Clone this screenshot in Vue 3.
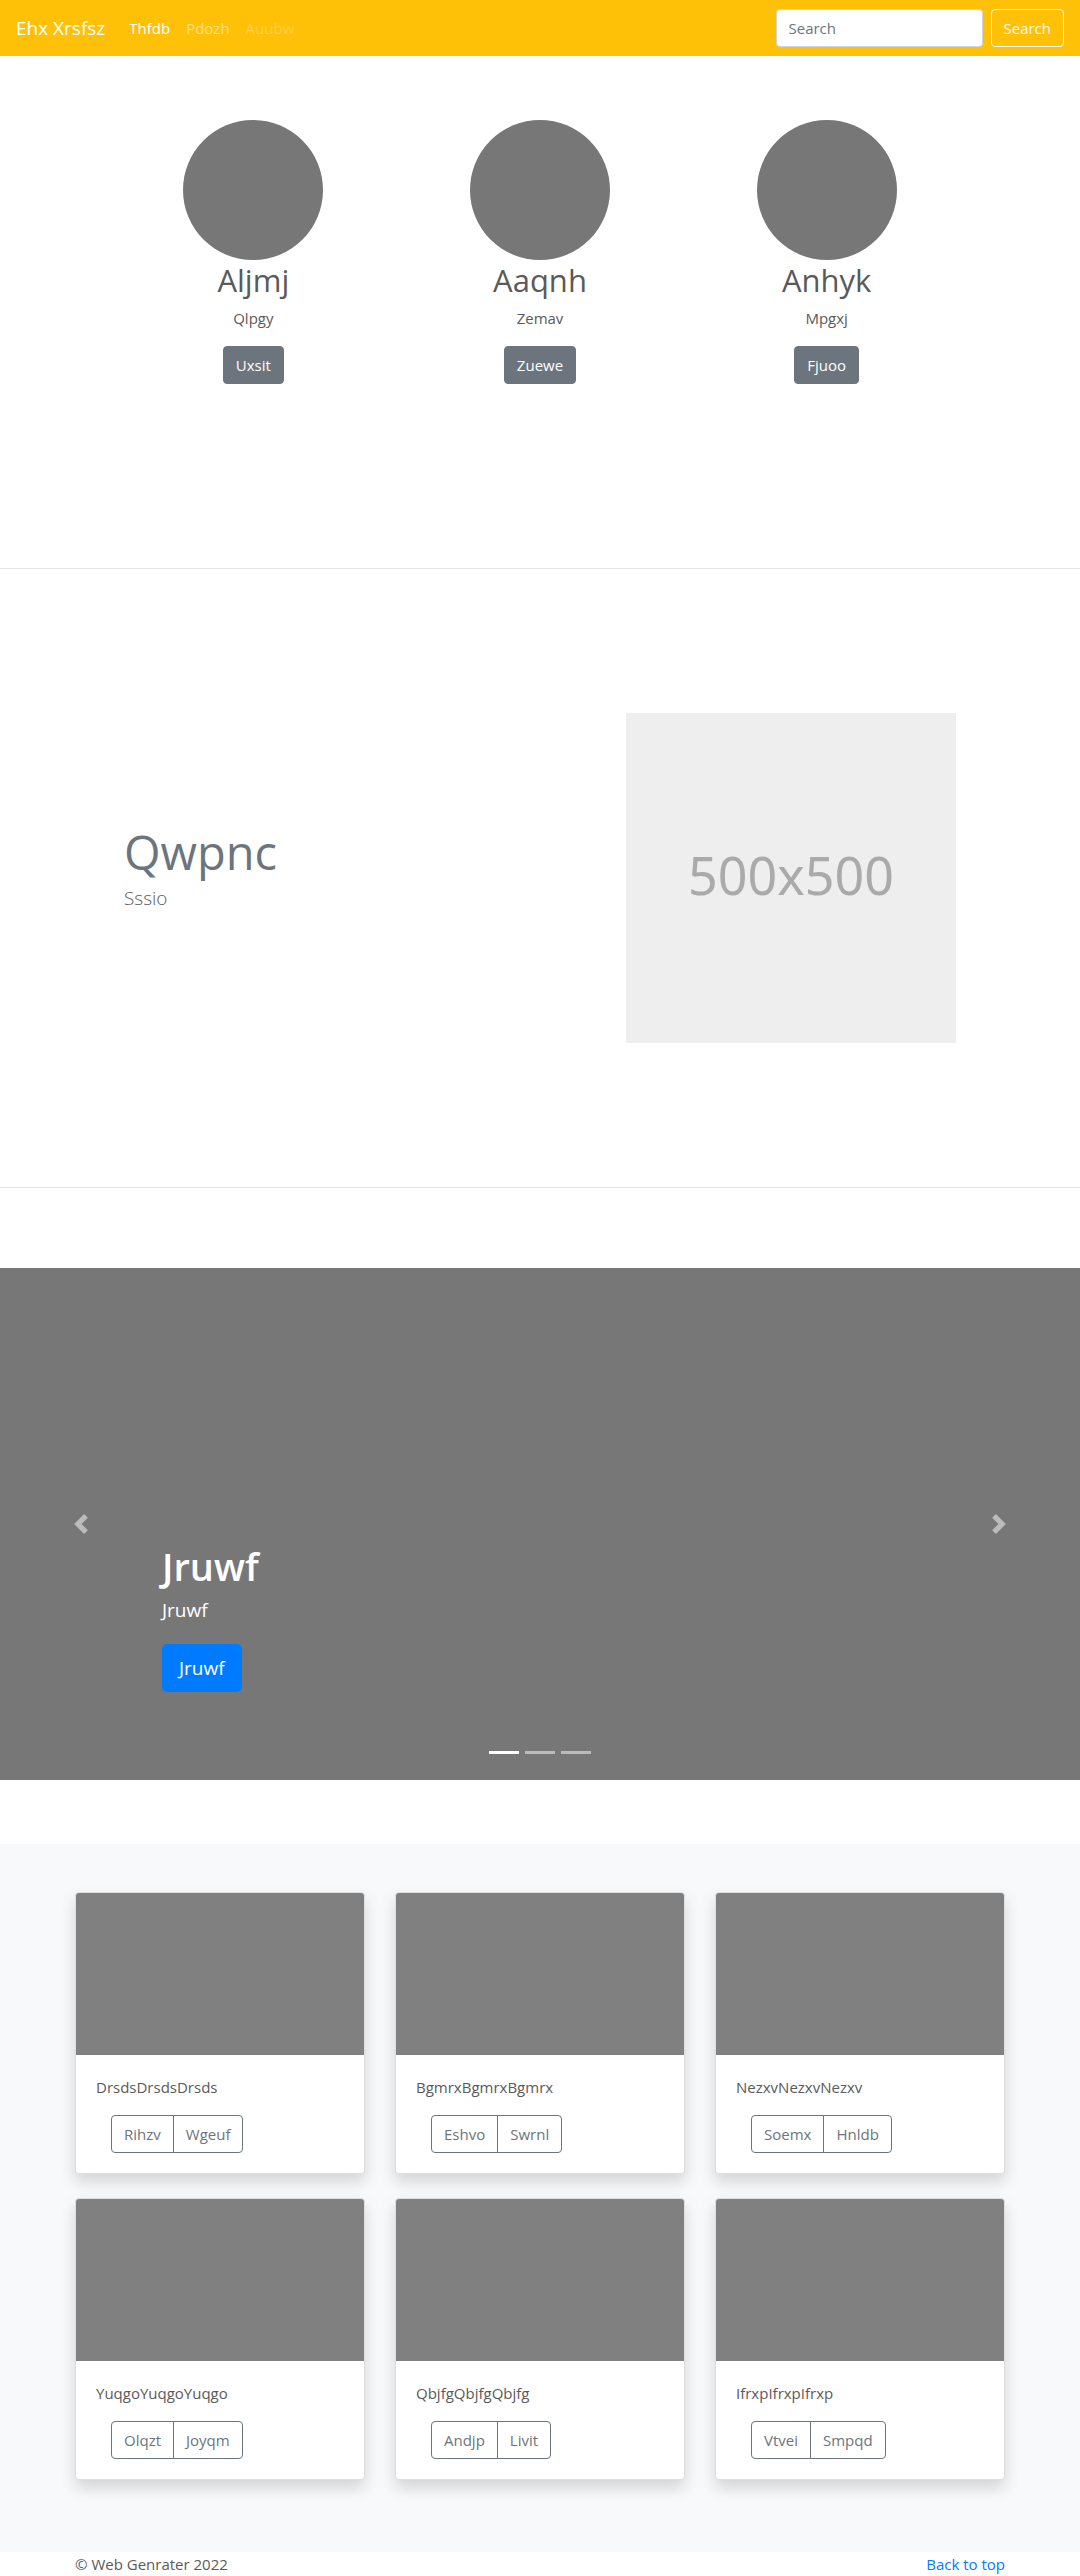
<script setup>
import { ref } from 'vue'

const query = ref('')
const active = ref(0)
const slides = ['Jruwf', 'Jruwf', 'Jruwf']

const people = [
  { name: 'Aljmj', text: 'Qlpgy', action: 'Uxsit' },
  { name: 'Aaqnh', text: 'Zemav', action: 'Zuewe' },
  { name: 'Anhyk', text: 'Mpgxj', action: 'Fjuoo' },
]

const cards = [
  { text: 'DrsdsDrsdsDrsds', actions: ['Rihzv', 'Wgeuf'] },
  { text: 'BgmrxBgmrxBgmrx', actions: ['Eshvo', 'Swrnl'] },
  { text: 'NezxvNezxvNezxv', actions: ['Soemx', 'Hnldb'] },
  { text: 'YuqgoYuqgoYuqgo', actions: ['Olqzt', 'Joyqm'] },
  { text: 'QbjfgQbjfgQbjfg', actions: ['Andjp', 'Livit'] },
  { text: 'IfrxpIfrxpIfrxp', actions: ['Vtvei', 'Smpqd'] },
]

function step(by) {
  active.value = (active.value + by + slides.length) % slides.length
}
</script>

<template>
  <div class="page">
    <header class="navbar">
      <a class="brand" href="#">Ehx Xrsfsz</a>
      <nav class="nav">
        <a class="nav-link current" href="#">Thfdb</a>
        <a class="nav-link" href="#">Pdozh</a>
        <a class="nav-link disabled" href="#" aria-disabled="true">Auubw</a>
      </nav>
      <form class="search" @submit.prevent>
        <input v-model="query" class="search-input" type="search" placeholder="Search" aria-label="Search" />
        <button class="btn btn-outline-light" type="submit">Search</button>
      </form>
    </header>

    <main>
      <section class="people">
        <article v-for="p in people" :key="p.name" class="person">
          <div class="avatar"></div>
          <h2 class="person-name">{{ p.name }}</h2>
          <p class="person-text">{{ p.text }}</p>
          <a class="btn btn-secondary" href="#">{{ p.action }}</a>
        </article>
      </section>

      <hr class="divider" />

      <section class="feature">
        <div class="feature-copy">
          <h2 class="feature-title">Qwpnc</h2>
          <p class="feature-lead">Sssio</p>
        </div>
        <div class="placeholder">500x500</div>
      </section>

      <hr class="divider" />

      <section class="carousel">
        <div class="caption">
          <h1 class="caption-title">{{ slides[active] }}</h1>
          <p class="caption-text">{{ slides[active] }}</p>
          <a class="btn btn-primary" href="#">{{ slides[active] }}</a>
        </div>
        <button class="control prev" type="button" aria-label="Previous" @click="step(-1)">
          <svg viewBox="0 0 8 8" width="20" height="20" fill="#fff">
            <path d="M5.25 0l-4 4 4 4 1.5-1.5-2.5-2.5 2.5-2.5-1.5-1.5z" />
          </svg>
        </button>
        <button class="control next" type="button" aria-label="Next" @click="step(1)">
          <svg viewBox="0 0 8 8" width="20" height="20" fill="#fff">
            <path d="M2.75 0l-1.5 1.5 2.5 2.5-2.5 2.5 1.5 1.5 4-4-4-4z" />
          </svg>
        </button>
        <div class="indicators">
          <button
            v-for="(s, i) in slides"
            :key="i"
            type="button"
            class="indicator"
            :class="{ on: i === active }"
            :aria-label="`Slide ${i + 1}`"
            @click="active = i"
          ></button>
        </div>
      </section>

      <section class="album">
        <div class="cards">
          <article v-for="c in cards" :key="c.text" class="card">
            <div class="card-image"></div>
            <div class="card-body">
              <p class="card-text">{{ c.text }}</p>
              <div class="btn-group">
                <button v-for="a in c.actions" :key="a" class="btn btn-outline" type="button">{{ a }}</button>
              </div>
            </div>
          </article>
        </div>
      </section>
    </main>

    <footer class="footer">
      <span>© Web Genrater 2022</span>
      <a class="top-link" href="#">Back to top</a>
    </footer>
  </div>
</template>

<style>
body {
  margin: 0;
  background: #fff;
}
</style>

<style scoped>
.page,
.page * {
  box-sizing: border-box;
}
.page {
  font-family: "Segoe UI", "Open Sans", "Noto Sans", sans-serif;
  font-size: 15px;
  line-height: 24px;
  color: #5a5a5a;
}
h1,
h2,
p {
  margin: 0;
}
a {
  text-decoration: none;
}

.btn {
  display: inline-block;
  padding: 6px 12px;
  border: 1px solid transparent;
  border-radius: 4px;
  background: transparent;
  font: inherit;
  text-align: center;
  cursor: pointer;
}
.btn-secondary {
  background: #6c757d;
  border-color: #6c757d;
  color: #fff;
}
.btn-outline-light {
  border-color: #f8f9fa;
  color: #f8f9fa;
}
.btn-primary {
  padding: 9px 16px;
  border-radius: 5px;
  background: #007bff;
  color: #fff;
  font-size: 19px;
  line-height: 28px;
}
.btn-outline {
  border-color: #6c757d;
  color: #6c757d;
}

.navbar {
  display: flex;
  align-items: center;
  height: 56px;
  padding: 0 16px;
  background: #ffc107;
}
.brand {
  margin-right: 16px;
  color: #fff;
  font-size: 19px;
}
.nav {
  display: flex;
  flex: 1;
}
.nav-link {
  padding: 8px;
  color: rgba(255, 255, 255, 0.5);
}
.nav-link.current {
  color: #fff;
}
.nav-link.disabled {
  color: rgba(255, 255, 255, 0.25);
}
.search {
  display: flex;
  gap: 8px;
}
.search-input {
  width: 207px;
  height: 38px;
  padding: 6px 12px;
  border: 1px solid #ced4da;
  border-radius: 4px;
  background: #fff;
  color: #495057;
  font: inherit;
  appearance: none;
}
.search-input::placeholder {
  color: #6c757d;
  opacity: 1;
}

.people {
  display: grid;
  grid-template-columns: repeat(3, 1fr);
  max-width: 860px;
  margin: 0 auto;
  padding: 64px 0 104px;
  text-align: center;
}
.avatar {
  width: 140px;
  height: 140px;
  margin: 0 auto;
  border-radius: 50%;
  background: #777;
}
.person-name {
  margin-bottom: 6px;
  font-size: 31px;
  font-weight: 400;
  line-height: 40px;
}
.person-text {
  margin-bottom: 16px;
}

.divider {
  margin: 80px 0;
  border: 0;
  border-top: 1px solid rgba(0, 0, 0, 0.1);
}

.feature {
  display: flex;
  align-items: center;
  justify-content: space-between;
  max-width: 832px;
  margin: 0 auto;
  padding: 64px 0;
}
.feature-title {
  margin-bottom: 6px;
  color: #6c757d;
  font-size: 47px;
  font-weight: 400;
  line-height: 50px;
}
.feature-lead {
  margin-bottom: 16px;
  font-size: 19px;
  font-weight: 300;
  line-height: 30px;
}
.placeholder {
  display: flex;
  align-items: center;
  justify-content: center;
  width: 330px;
  height: 330px;
  padding-bottom: 6px;
  background: #eee;
  color: #aaa;
  font-family: "Noto Sans", sans-serif;
  font-size: 52px;
}

.carousel {
  position: relative;
  height: 512px;
  margin-bottom: 64px;
  background: #777;
  color: #fff;
}
.caption {
  position: absolute;
  bottom: 88px;
  left: 15%;
}
.caption-title {
  margin-bottom: 6px;
  font-size: 38px;
  font-weight: 600;
  line-height: 48px;
}
.caption-text {
  margin-bottom: 20px;
  font-size: 19px;
  line-height: 28px;
}
.control {
  position: absolute;
  top: 0;
  bottom: 0;
  display: flex;
  align-items: center;
  justify-content: center;
  width: 15%;
  padding: 0;
  border: 0;
  background: none;
  opacity: 0.5;
  cursor: pointer;
}
.prev {
  left: 0;
}
.next {
  right: 0;
}
.indicators {
  position: absolute;
  right: 0;
  bottom: 26px;
  left: 0;
  display: flex;
  justify-content: center;
  gap: 6px;
}
.indicator {
  width: 30px;
  height: 3px;
  padding: 0;
  border: 0;
  background: #fff;
  opacity: 0.5;
  cursor: pointer;
}
.indicator.on {
  opacity: 1;
}

.album {
  padding: 48px 0 72px;
  background: #f8f9fa;
}
.cards {
  display: grid;
  grid-template-columns: repeat(3, 1fr);
  gap: 24px 30px;
  max-width: 930px;
  margin: 0 auto;
}
.card {
  border: 1px solid rgba(0, 0, 0, 0.125);
  border-radius: 4px;
  background: #fff;
  background-clip: border-box;
  box-shadow: 0 8px 16px rgba(0, 0, 0, 0.15);
}
.card-image {
  height: 162px;
  border-radius: 3px 3px 0 0;
  background: #808080;
}
.card-body {
  padding: 20px;
}
.card-text {
  margin-bottom: 16px;
}
.btn-group {
  display: flex;
  padding-left: 15px;
}
.btn-group .btn:first-child {
  border-top-right-radius: 0;
  border-bottom-right-radius: 0;
}
.btn-group .btn:last-child {
  margin-left: -1px;
  border-top-left-radius: 0;
  border-bottom-left-radius: 0;
}

.footer {
  display: flex;
  justify-content: space-between;
  max-width: 930px;
  margin: 0 auto;
}
.top-link {
  color: #007bff;
}
</style>
